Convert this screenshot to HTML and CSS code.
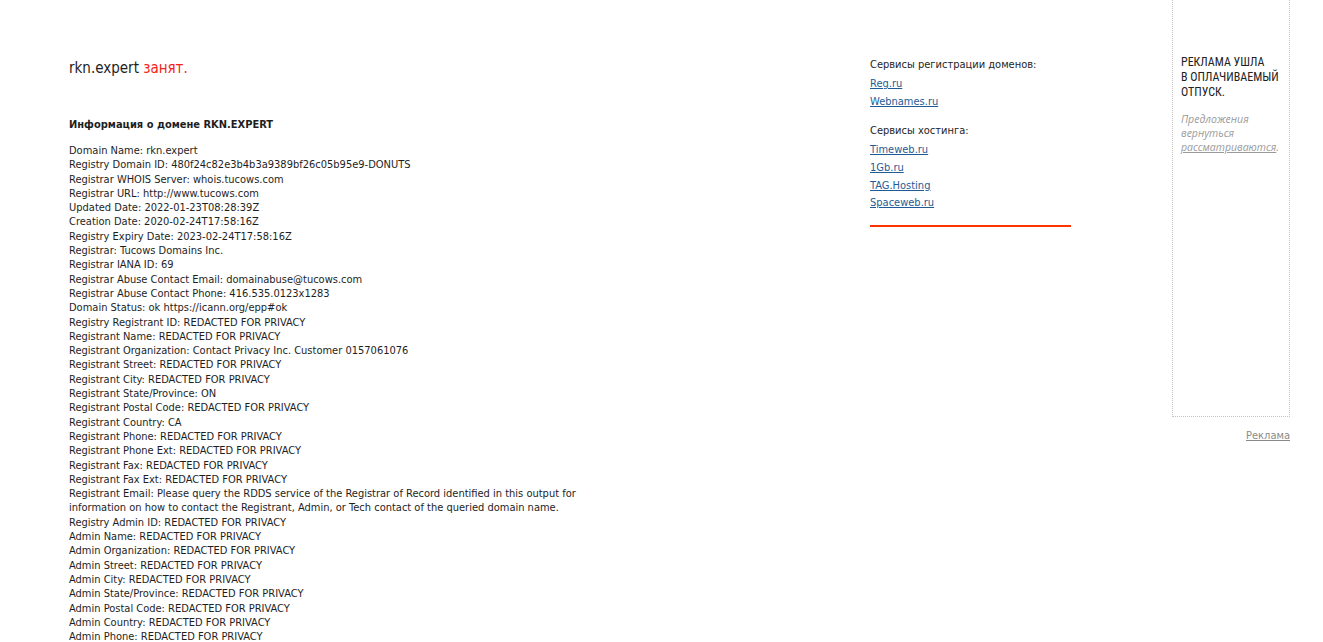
FILE: index.html
```html
<!DOCTYPE html>
<html lang="ru">
<head>
    <meta charset="UTF-8">
    <title>rkn.expert — whois</title>
    <link rel="stylesheet" href="styles.css">
</head>
<body>
    <div class="page">
        <!-- Main column -->
        <div class="main">
            <h1 class="domain-title">rkn.expert <span class="busy">занят.</span></h1>

            <h2 class="whois-title">Информация о домене RKN.EXPERT</h2>
            <div class="whois">
                <div>Domain Name: rkn.expert</div>
                <div>Registry Domain ID: 480f24c82e3b4b3a9389bf26c05b95e9-DONUTS</div>
                <div>Registrar WHOIS Server: whois.tucows.com</div>
                <div>Registrar URL: http://www.tucows.com</div>
                <div>Updated Date: 2022-01-23T08:28:39Z</div>
                <div>Creation Date: 2020-02-24T17:58:16Z</div>
                <div>Registry Expiry Date: 2023-02-24T17:58:16Z</div>
                <div>Registrar: Tucows Domains Inc.</div>
                <div>Registrar IANA ID: 69</div>
                <div>Registrar Abuse Contact Email: domainabuse@tucows.com</div>
                <div>Registrar Abuse Contact Phone: 416.535.0123x1283</div>
                <div>Domain Status: ok https://icann.org/epp#ok</div>
                <div>Registry Registrant ID: REDACTED FOR PRIVACY</div>
                <div>Registrant Name: REDACTED FOR PRIVACY</div>
                <div>Registrant Organization: Contact Privacy Inc. Customer 0157061076</div>
                <div>Registrant Street: REDACTED FOR PRIVACY</div>
                <div>Registrant City: REDACTED FOR PRIVACY</div>
                <div>Registrant State/Province: ON</div>
                <div>Registrant Postal Code: REDACTED FOR PRIVACY</div>
                <div>Registrant Country: CA</div>
                <div>Registrant Phone: REDACTED FOR PRIVACY</div>
                <div>Registrant Phone Ext: REDACTED FOR PRIVACY</div>
                <div>Registrant Fax: REDACTED FOR PRIVACY</div>
                <div>Registrant Fax Ext: REDACTED FOR PRIVACY</div>
                <div>Registrant Email: Please query the RDDS service of the Registrar of Record identified in this output for information on how to contact the Registrant, Admin, or Tech contact of the queried domain name.</div>
                <div>Registry Admin ID: REDACTED FOR PRIVACY</div>
                <div>Admin Name: REDACTED FOR PRIVACY</div>
                <div>Admin Organization: REDACTED FOR PRIVACY</div>
                <div>Admin Street: REDACTED FOR PRIVACY</div>
                <div>Admin City: REDACTED FOR PRIVACY</div>
                <div>Admin State/Province: REDACTED FOR PRIVACY</div>
                <div>Admin Postal Code: REDACTED FOR PRIVACY</div>
                <div>Admin Country: REDACTED FOR PRIVACY</div>
                <div>Admin Phone: REDACTED FOR PRIVACY</div>
            </div>
        </div>

        <!-- Services -->
        <div class="services">
            <div class="services-title">Сервисы регистрации доменов:</div>
            <ul class="services-list">
                <li><a href="#">Reg.ru</a></li>
                <li><a href="#">Webnames.ru</a></li>
            </ul>
            <div class="services-title">Сервисы хостинга:</div>
            <ul class="services-list">
                <li><a href="#">Timeweb.ru</a></li>
                <li><a href="#">1Gb.ru</a></li>
                <li><a href="#">TAG.Hosting</a></li>
                <li><a href="#">Spaceweb.ru</a></li>
            </ul>
            <div class="services-line"></div>
        </div>

        <!-- Ad column -->
        <div class="ad-column">
            <div class="ad-box">
                <div class="ad-title">РЕКЛАМА УШЛА<br>В ОПЛАЧИВАЕМЫЙ<br>ОТПУСК.</div>
                <div class="ad-note">Предложения вернуться <a href="#">рассматриваются</a>.</div>
            </div>
            <div class="ad-footer"><a href="#">Реклама</a></div>
        </div>
    </div>
</body>
</html>
```
FILE: styles.css
```css
/* Base */
body {
    margin: 0;
    font-family: 'DejaVu Sans Condensed', 'DejaVu Sans', sans-serif;
    font-size: 11px;
    color: #1e1e1e;
    background: #fff;
    overflow: hidden;
}

.page {
    display: flex;
    align-items: flex-start;
    padding-left: 69px;
}

/* Main column */
.main {
    width: 801px;
    flex-shrink: 0;
    padding-top: 58px;
}

.domain-title {
    font-size: 15px;
    font-weight: normal;
    line-height: 20px;
    margin: 0 0 40px;
    color: #1e1e1e;
}

.domain-title .busy {
    color: #f5231a;
}

.whois-title {
    font-size: 11px;
    font-weight: bold;
    line-height: 14px;
    margin: 0 0 12px;
}

.whois {
    width: 512px;
    line-height: 14.3px;
}

/* Services */
.services {
    width: 302px;
    flex-shrink: 0;
    padding-top: 57px;
}

.services-title {
    line-height: 16px;
    margin-bottom: 2px;
}

.services-list {
    list-style: none;
    margin: 0 0 13px;
    padding: 0;
}

.services-list li {
    line-height: 17.7px;
}

.services-list li:nth-child(n+3) {
    line-height: 17.4px;
}

.services-list a {
    color: #1f5c96;
    text-decoration: underline;
}

.services-line {
    width: 201px;
    height: 2px;
    margin-top: 9px;
    background: #ff3300;
}

/* Ad column */
.ad-column {
    width: 118px;
    flex-shrink: 0;
}

.ad-box {
    height: 417px;
    box-sizing: border-box;
    border: 1px dotted #c4c4c4;
    border-top: none;
    padding: 55px 8px 0;
}

.ad-title {
    font-family: 'Roboto Condensed', Roboto, sans-serif;
    font-size: 12px;
    line-height: 15px;
    color: #222;
    margin-bottom: 12px;
}

.ad-note {
    font-family: 'Open Sans', sans-serif;
    font-style: italic;
    font-size: 10.5px;
    line-height: 14px;
    color: #9a9a9a;
}

.ad-note a {
    color: #9a9a9a;
}

.ad-footer {
    text-align: right;
    padding-top: 12px;
    line-height: 14px;
}

.ad-footer a {
    color: #8a8a8a;
}
```
